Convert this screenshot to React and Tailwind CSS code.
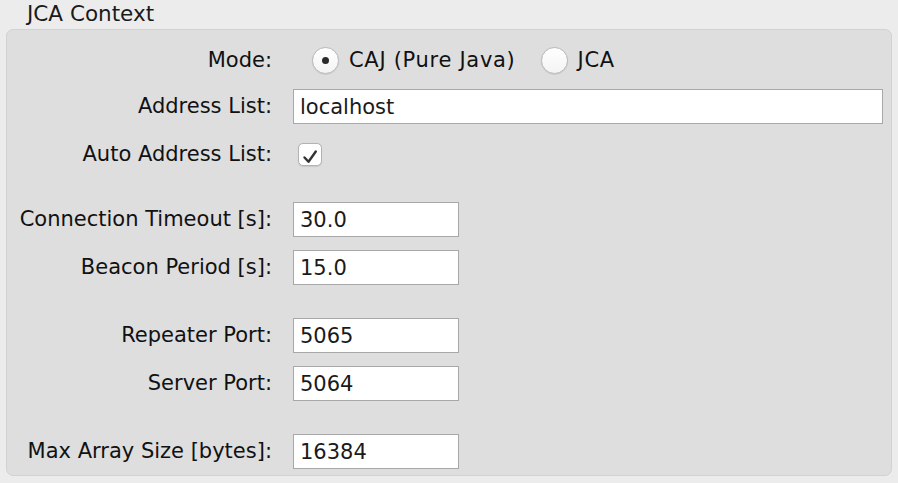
import React from "react";

const font = { fontFamily: '"DejaVu Sans", "Liberation Sans", sans-serif' };

function Label({ children }) {
  return (
    <div className="w-[265px] shrink-0 text-right text-[21px] leading-[35px] text-[#111]">
      {children}
    </div>
  );
}

function Input({ value, wide }) {
  return (
    <div
      className={
        (wide ? "flex-1 mr-[8px] " : "w-[166px] ") +
        "h-[35px] border border-[#a8a8a8] bg-white pl-[6px] pt-[1px] text-[21px] leading-[33px] text-[#1a1a1a]"
      }
    >
      {value}
    </div>
  );
}

function Radio({ checked }) {
  return (
    <div className="w-[27px] h-[27px] rounded-full border border-[#b9b9b9] bg-gradient-to-b from-white to-[#f4f4f4] shadow-[0_0.5px_1px_rgba(0,0,0,0.15)] flex items-center justify-center shrink-0">
      {checked && <div className="w-[7px] h-[7px] rounded-full bg-[#2a2a2a]" />}
    </div>
  );
}

function Row({ label, children, className }) {
  return (
    <div className={"flex items-center h-[35px] " + (className || "")}>
      <Label>{label}</Label>
      <div className="ml-[21px] flex items-center flex-1">{children}</div>
    </div>
  );
}

export default function App() {
  return (
    <div className="w-[898px] h-[483px] bg-[#ececec] overflow-hidden" style={font}>
      <div className="h-[29px] pl-[27px] text-[21.5px] leading-[29px] text-[#1a1a1a]">
        <span className="relative top-[-1px]">JCA Context</span>
      </div>
      <div className="ml-[6px] mr-[6px] h-[447px] rounded-[7px] border border-[#d2d2d2] bg-[#dedede] pt-[13px]">
        <Row label="Mode:">
          <div className="ml-[19px] flex items-center text-[21px] tracking-[0.7px] text-[#111]">
            <Radio checked />
            <span className="ml-[10px]">CAJ (Pure Java)</span>
            <div className="ml-[25px]">
              <Radio />
            </div>
            <span className="ml-[10px]">JCA</span>
          </div>
        </Row>
        <Row label="Address List:" className="mt-[11px]">
          <Input value="localhost" wide />
        </Row>
        <Row label="Auto Address List:" className="mt-[13px]">
          <div className="relative ml-[5px] w-[24px] h-[23px] rounded-[5px] border border-[#b3b3b3] bg-white shadow-[0_0.5px_1px_rgba(0,0,0,0.1)]">
            <svg className="absolute left-[-1px] top-[-1px]" width="24" height="23" viewBox="0 0 24 23">
              <path d="M6.5 14.5 L10.5 18.8 L17.8 8.5" fill="none" stroke="#333" strokeWidth="2.4" strokeLinecap="round" strokeLinejoin="round" />
            </svg>
          </div>
        </Row>
        <Row label="Connection Timeout [s]:" className="mt-[30px]">
          <Input value="30.0" />
        </Row>
        <Row label="Beacon Period [s]:" className="mt-[13px]">
          <Input value="15.0" />
        </Row>
        <Row label="Repeater Port:" className="mt-[33px]">
          <Input value="5065" />
        </Row>
        <Row label="Server Port:" className="mt-[13px]">
          <Input value="5064" />
        </Row>
        <Row label="Max Array Size [bytes]:" className="mt-[33px]">
          <Input value="16384" />
        </Row>
      </div>
    </div>
  );
}
